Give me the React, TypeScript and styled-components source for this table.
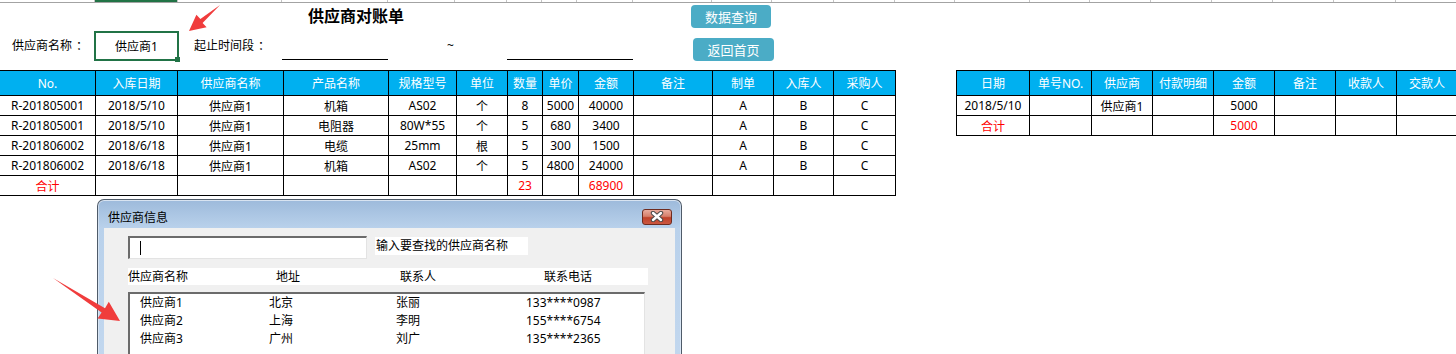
import React from 'react';
import styled, { createGlobalStyle } from 'styled-components';

const FONT = `"Noto Sans", "Noto Sans CJK SC", sans-serif`;

const GlobalStyle = createGlobalStyle`
  html, body {
    margin: 0;
    padding: 0;
    background: #fff;
  }
  body {
    font-family: ${FONT};
  }
`;

type Row = { cells: string[]; total?: boolean };

const stripCols = [95, 83, 104, 106, 67, 52, 35, 35, 56, 79, 60, 62, 61, 60, 75, 60, 61, 61, 61, 61, 62, 100];

const leftCols = [96, 82, 106, 105, 68, 51, 35, 36, 55, 79, 61, 60, 62];
const leftHead = ['No.', '入库日期', '供应商名称', '产品名称', '规格型号', '单位', '数量', '单价', '金额', '备注', '制单', '入库人', '采购人'];
const leftRows: Row[] = [
  { cells: ['R-201805001', '2018/5/10', '供应商1', '机箱', 'AS02', '个', '8', '5000', '40000', '', 'A', 'B', 'C'] },
  { cells: ['R-201805001', '2018/5/10', '供应商1', '电阻器', '80W*55', '个', '5', '680', '3400', '', 'A', 'B', 'C'] },
  { cells: ['R-201806002', '2018/6/18', '供应商1', '电缆', '25mm', '根', '5', '300', '1500', '', 'A', 'B', 'C'] },
  { cells: ['R-201806002', '2018/6/18', '供应商1', '机箱', 'AS02', '个', '5', '4800', '24000', '', 'A', 'B', 'C'] },
  { cells: ['合计', '', '', '', '', '', '23', '', '68900', '', '', '', ''], total: true }
];

const rightCols = [73, 62, 61, 61, 61, 61, 61, 61];
const rightHead = ['日期', '单号NO.', '供应商', '付款明细', '金额', '备注', '收款人', '交款人'];
const rightRows: Row[] = [
  { cells: ['2018/5/10', '', '供应商1', '', '5000', '', '', ''] },
  { cells: ['合计', '', '', '', '5000', '', '', ''], total: true }
];

const suppliers = [
  ['供应商1', '北京', '张丽', '133****0987'],
  ['供应商2', '上海', '李明', '155****6754'],
  ['供应商3', '广州', '刘广', '135****2365']
];

const Page = styled.div`
  position: relative;
  width: 1456px;
  height: 354px;
  overflow: hidden;
  background: #fff;
  font-family: ${FONT};
  font-size: 12px;
  color: #000;
`;

const ColumnStrip = styled.div`
  display: flex;
  height: 3px;
  box-sizing: border-box;
  border-bottom: 1px solid #a3a3a3;
`;

const ColumnHead = styled.div<{ $w: number; $active?: boolean }>`
  flex: 0 0 ${({ $w }) => $w}px;
  height: 2px;
  box-sizing: border-box;
  border-right: 1px solid #c4c4c4;
  background: ${({ $active }) => ($active ? '#217346' : 'transparent')};
`;

const TopArea = styled.div`
  display: flex;
  height: 67px;
`;

const FormColumn = styled.div`
  width: 691px;
  display: flex;
  flex-direction: column;
`;

const Title = styled.div`
  height: 26px;
  line-height: 26px;
  padding-left: 308px;
  font-size: 16px;
  font-weight: 700;
`;

const FilterRow = styled.div`
  display: flex;
  align-items: center;
  height: 30px;
  margin-top: 2px;
`;

const FieldLabel = styled.span<{ $w: number; $pl: number }>`
  width: ${({ $w }) => $w}px;
  padding-left: ${({ $pl }) => $pl}px;
  box-sizing: border-box;
  line-height: 16px;
  white-space: nowrap;
`;

const Colon = styled.span`
  padding-left: 4px;
`;

const SelectedCell = styled.div`
  position: relative;
  width: 85px;
  height: 30px;
  box-sizing: border-box;
  border: 2px solid #217346;
  display: flex;
  align-items: center;
  justify-content: center;
`;

const FillHandle = styled.span`
  position: absolute;
  right: -3px;
  bottom: -3px;
  width: 5px;
  height: 5px;
  background: #217346;
`;

const Underline = styled.div<{ $w: number }>`
  width: ${({ $w }) => $w}px;
  align-self: stretch;
  margin-bottom: 1px;
  border-bottom: 1px solid #000;
`;

const ButtonColumn = styled.div`
  display: flex;
  flex-direction: column;
  gap: 10px;
  padding-top: 2px;
`;

const ActionButton = styled.div<{ $ml: number; $w: number }>`
  margin-left: ${({ $ml }) => $ml}px;
  width: ${({ $w }) => $w}px;
  height: 23px;
  border-radius: 4px;
  background: #4bacc6;
  color: #fff;
  font-size: 13px;
  display: flex;
  align-items: center;
  justify-content: center;
`;

const TablesRow = styled.div`
  display: flex;
  align-items: flex-start;
`;

const TableGap = styled.div`
  flex: 0 0 60px;
`;

const SheetGrid = styled.div<{ $cols: string; $boxed?: boolean }>`
  display: grid;
  grid-template-columns: ${({ $cols }) => $cols};
  border-top: 1px solid #000;
  border-left: ${({ $boxed }) => ($boxed ? '1px solid #000' : 'none')};
  flex-shrink: 0;
`;

const Cell = styled.div<{ $head?: boolean; $red?: boolean }>`
  height: ${({ $head }) => ($head ? 25 : 20)}px;
  box-sizing: border-box;
  border-right: 1px solid #000;
  border-bottom: 1px solid #000;
  display: flex;
  align-items: center;
  justify-content: center;
  white-space: nowrap;
  overflow: hidden;
  background: ${({ $head }) => ($head ? '#00b0f0' : '#fff')};
  color: ${({ $head, $red }) => ($head ? '#fff' : $red ? '#ff0000' : '#000')};
`;

const Sheet = ({ cols, head, rows, boxed }: { cols: number[]; head: string[]; rows: Row[]; boxed?: boolean }) => (
  <SheetGrid $cols={cols.map((c) => `${c}px`).join(' ')} $boxed={boxed}>
    {head.map((h, i) => (
      <Cell key={`h${i}`} $head>
        {h}
      </Cell>
    ))}
    {rows.map((r, ri) =>
      r.cells.map((c, ci) => (
        <Cell key={`${ri}-${ci}`} $red={r.total}>
          {c}
        </Cell>
      ))
    )}
  </SheetGrid>
);

const DialogWindow = styled.div`
  position: absolute;
  left: 97px;
  top: 199px;
  width: 585px;
  height: 175px;
  box-sizing: border-box;
  border: 1px solid #4f5b69;
  border-bottom: none;
  border-radius: 7px 7px 0 0;
  padding: 0 6px;
  background: linear-gradient(#9dbadb, #b9d1eb 28px, #c3d8ef);
  box-shadow: inset 0 1px 0 rgba(255, 255, 255, 0.6), inset 1px 0 0 rgba(255, 255, 255, 0.4),
    inset -1px 0 0 rgba(255, 255, 255, 0.4);
  display: flex;
  flex-direction: column;
`;

const TitleBar = styled.div`
  height: 28px;
  box-sizing: border-box;
  padding: 5px 3px 0 4px;
  display: flex;
  align-items: center;
  justify-content: space-between;
  flex-shrink: 0;
`;

const CloseButton = styled.div`
  width: 30px;
  height: 16px;
  box-sizing: border-box;
  border: 1px solid #6e2b1f;
  border-radius: 3px;
  background: linear-gradient(#e9ab9d 0%, #d67f6b 45%, #bf412a 55%, #cb5841 100%);
  display: flex;
  align-items: center;
  justify-content: center;
`;

const DialogBody = styled.div`
  flex: 1;
  background: #f0f0f0;
  padding: 8px 0 0 24px;
`;

const SearchRow = styled.div`
  display: flex;
  align-items: flex-start;
`;

const Inset = styled.div`
  box-sizing: border-box;
  background: #fff;
  border-style: solid;
  border-width: 2px 1px 1px 2px;
  border-color: #6b6b6b #e3e3e3 #e3e3e3 #6b6b6b;
`;

const SearchInput = styled(Inset)`
  width: 239px;
  height: 23px;
  padding-left: 10px;
  display: flex;
  align-items: center;
`;

const Caret = styled.span`
  width: 1px;
  height: 14px;
  background: #000;
`;

const Hint = styled.div`
  margin: 1px 0 0 8px;
  width: 153px;
  height: 18px;
  line-height: 18px;
  padding-left: 1px;
  box-sizing: border-box;
  background: #fff;
  white-space: nowrap;
`;

const ListHeader = styled.div`
  margin-top: 9px;
  width: 520px;
  height: 17px;
  line-height: 17px;
  background: #fff;
  display: grid;
  grid-template-columns: 148px 124px 144px auto;
`;

const ListBox = styled(Inset)`
  margin-top: 7px;
  width: 517px;
  height: 90px;
  padding-left: 10px;
`;

const ListRow = styled.div`
  height: 18px;
  line-height: 18px;
  display: grid;
  grid-template-columns: 129px 127px 130px auto;
`;

const Annotations = styled.svg`
  position: absolute;
  left: 0;
  top: 0;
  pointer-events: none;
`;

const App = () => (
  <Page>
    <GlobalStyle />
    <ColumnStrip>
      {stripCols.map((w, i) => (
        <ColumnHead key={i} $w={w} $active={i === 1} />
      ))}
    </ColumnStrip>

    <TopArea>
      <FormColumn>
        <Title>供应商对账单</Title>
        <FilterRow>
          <FieldLabel $w={94} $pl={12}>
            供应商名称<Colon>：</Colon>
          </FieldLabel>
          <SelectedCell>
            供应商1
            <FillHandle />
          </SelectedCell>
          <FieldLabel $w={103} $pl={15}>
            起止时间段<Colon>：</Colon>
          </FieldLabel>
          <Underline $w={106} />
          <FieldLabel $w={119} $pl={59}>
            ~
          </FieldLabel>
          <Underline $w={126} />
        </FilterRow>
      </FormColumn>
      <ButtonColumn>
        <ActionButton $ml={0} $w={80}>
          数据查询
        </ActionButton>
        <ActionButton $ml={2} $w={81}>
          返回首页
        </ActionButton>
      </ButtonColumn>
    </TopArea>

    <TablesRow>
      <Sheet cols={leftCols} head={leftHead} rows={leftRows} />
      <TableGap />
      <Sheet cols={rightCols} head={rightHead} rows={rightRows} boxed />
    </TablesRow>

    <DialogWindow>
      <TitleBar>
        <span>供应商信息</span>
        <CloseButton>
          <svg width="14" height="11" viewBox="0 0 14 11">
            <path d="M3 2 L11 9 M11 2 L3 9" stroke="#4a4a4a" strokeWidth="4.4" strokeLinecap="round" />
            <path d="M3 2 L11 9 M11 2 L3 9" stroke="#fff" strokeWidth="2.4" strokeLinecap="round" />
          </svg>
        </CloseButton>
      </TitleBar>
      <DialogBody>
        <SearchRow>
          <SearchInput>
            <Caret />
          </SearchInput>
          <Hint>输入要查找的供应商名称</Hint>
        </SearchRow>
        <ListHeader>
          <span>供应商名称</span>
          <span>地址</span>
          <span>联系人</span>
          <span>联系电话</span>
        </ListHeader>
        <ListBox>
          {suppliers.map((s) => (
            <ListRow key={s[0]}>
              {s.map((v) => (
                <span key={v}>{v}</span>
              ))}
            </ListRow>
          ))}
        </ListBox>
      </DialogBody>
    </DialogWindow>

    <Annotations width="1456" height="354" viewBox="0 0 1456 354">
      <polygon points="220,5 202.6,22.9 206.6,27.3 189,31 196.4,14.7 200.4,19.1" fill="#f03c3c" />
      <polygon points="53,278 101.6,312.5 97.6,318.6 120,321 108.8,301.8 105,308.3" fill="#f03c3c" />
    </Annotations>
  </Page>
);

export default App;
